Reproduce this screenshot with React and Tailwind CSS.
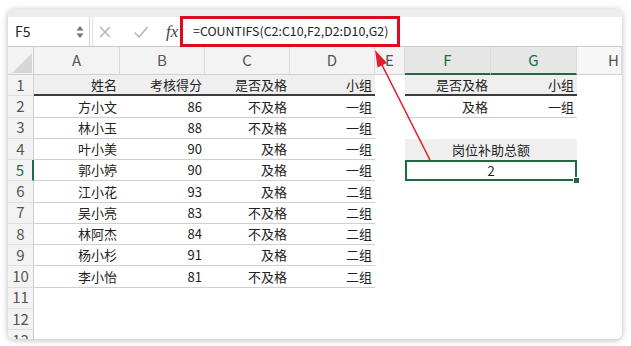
import React from "react";

const FONT = { fontFamily: '"Noto Sans CJK SC", "Noto Sans", sans-serif' };

const rows = [
  ["姓名", "考核得分", "是否及格", "小组"],
  ["方小文", "86", "不及格", "一组"],
  ["林小玉", "88", "不及格", "一组"],
  ["叶小美", "90", "及格", "一组"],
  ["郭小婷", "90", "及格", "一组"],
  ["江小花", "93", "及格", "二组"],
  ["吴小亮", "83", "不及格", "二组"],
  ["林阿杰", "84", "不及格", "二组"],
  ["杨小杉", "91", "及格", "二组"],
  ["李小怡", "81", "不及格", "二组"],
];

function RowNum({ n }) {
  const sel = n === 5;
  return (
    <div
      className={
        "h-[21.25px] flex items-center justify-center text-[15px] bg-[#f3f3f3] border-b border-[#dedede] " +
        (sel ? "text-[#1d6b3e] border-r-2 border-r-[#1d6b3e]" : "text-[#555] border-r border-r-[#cfcfcf]")
      }
    >
      {n}
    </div>
  );
}

function Cell({ children, cls = "" }) {
  return (
    <div className={"h-[21.25px] flex items-center justify-end pr-[3px] text-[13px] text-[#222] " + cls}>
      {children}
    </div>
  );
}

export default function App() {
  const headers = ["A", "B", "C", "D", "E", "F", "G", "H"];
  return (
    <div className="relative w-[631px] h-[346px] bg-white overflow-hidden pt-[9px] pl-[8px]" style={FONT}>
      <div className="relative w-[614px] h-[330px] rounded-[6px] bg-white shadow-[0_1px_6px_rgba(0,0,0,0.28)] overflow-hidden flex flex-col">
        <div className="h-[8px] shrink-0 bg-[#ececec]" />
        {/* formula bar */}
        <div className="h-[30px] shrink-0 flex items-stretch bg-white border-b border-[#c9c9c9]">
          <div className="w-[82px] flex items-center justify-between pl-[7px] pr-[5px] border-r border-[#d4d4d4]">
            <span className="text-[14px] text-[#222]">F5</span>
            <svg width="8" height="14" viewBox="0 0 8 14">
              <polygon points="4,1 7.5,5.5 0.5,5.5" fill="#707070" />
              <polygon points="4,13 7.5,8.5 0.5,8.5" fill="#707070" />
            </svg>
          </div>
          <div className="w-[3px] border-r border-[#e2e2e2]" />
          <div className="w-[88px] flex items-center">
            <svg className="ml-[5px]" width="14" height="14" viewBox="0 0 14 14">
              <path d="M2 2 L12 12 M12 2 L2 12" stroke="#b8b8b8" strokeWidth="1.6" />
            </svg>
            <svg className="ml-[21px]" width="16" height="14" viewBox="0 0 16 14">
              <path d="M1.5 7.5 L6 12 L14.5 2" stroke="#b8b8b8" strokeWidth="1.6" fill="none" />
            </svg>
            <span
              className="ml-[17px] text-[17px] text-[#444] italic"
              style={{ fontFamily: '"Liberation Serif", "DejaVu Serif", serif' }}
            >
              fx
            </span>
          </div>
          <div className="flex-1 flex items-center pl-[12px] text-[12.4px] text-[#222]">
            =COUNTIFS(C2:C10,F2,D2:D10,G2)
          </div>
        </div>
        <div className="absolute left-[172px] top-[7px] w-[220px] h-[31px] border-[3px] border-[#de0a1e]" />

        {/* grid */}
        <div className="shrink-0 grid grid-cols-[26px_86px_85px_85px_85px_30px_86px_86px_1fr]">
          {/* header row */}
          <div className="h-[28px] bg-[#f3f3f3] border-r border-b border-[#cfcfcf] flex items-end justify-end">
            <svg width="22" height="22" viewBox="0 0 22 22">
              <polygon points="21,1 21,21 1,21" fill="#d6d6d6" />
            </svg>
          </div>
          {headers.map((h) => {
            const sel = h === "F" || h === "G";
            return (
              <div
                key={h}
                className={
                  "h-[28px] flex items-center text-[15px] border-r border-r-[#dadada] " +
                  (sel
                    ? "justify-center bg-[#e6e6e6] text-[#1d6b3e] border-b-2 border-b-[#1d6b3e]"
                    : h === "H"
                    ? "justify-end pr-[2px] bg-[#f7f7f7] text-[#555] border-b border-b-[#cfcfcf]"
                    : "justify-center bg-[#f3f3f3] text-[#555] border-b border-b-[#cfcfcf]")
                }
              >
                {h}
              </div>
            );
          })}

          {/* data rows */}
          {Array.from({ length: 13 }).map((_, i) => {
            const n = i + 1;
            const r = rows[i];
            const out = [<RowNum key={"n" + n} n={n} />];
            if (r) {
              r.forEach((v, j) => {
                out.push(
                  <Cell
                    key={n + "-" + j}
                    cls={
                      n === 1
                        ? "bg-[#efefef] border-b-2 border-[#3c3c3c]"
                        : "border-b border-[#cfcfcf]"
                    }
                  >
                    {v}
                  </Cell>
                );
              });
            } else {
              for (let j = 0; j < 4; j++) out.push(<Cell key={n + "-" + j} />);
            }
            out.push(<Cell key={n + "-E"} />);
            if (n === 1) {
              out.push(
                <Cell key="f1" cls="bg-[#efefef] border-b-2 border-[#3c3c3c]">是否及格</Cell>,
                <Cell key="g1" cls="bg-[#efefef] border-b-2 border-[#3c3c3c]">小组</Cell>
              );
            } else if (n === 2) {
              out.push(
                <Cell key="f2" cls="border-b border-[#cfcfcf]">及格</Cell>,
                <Cell key="g2" cls="border-b border-[#cfcfcf]">一组</Cell>
              );
            } else if (n === 4) {
              out.push(
                <div
                  key="f4"
                  className="col-span-2 h-[21.25px] flex items-center justify-center text-[13px] text-[#222] bg-[#efefef]"
                >
                  岗位补助总额
                </div>
              );
            } else if (n === 5) {
              out.push(
                <div
                  key="f5"
                  className="relative col-span-2 h-[21.25px] flex items-center justify-center text-[13px] text-[#222] border-2 border-[#1d6b3e]"
                >
                  2
                  <div className="absolute right-[-5px] bottom-[-5px] w-[7px] h-[7px] bg-[#1d6b3e] border border-white" />
                </div>
              );
            } else {
              out.push(<Cell key={n + "-F"} />, <Cell key={n + "-G"} />);
            }
            out.push(<Cell key={n + "-H"} />);
            return out;
          })}
        </div>
      </div>

      {/* annotation arrow */}
      <svg className="absolute left-0 top-0 pointer-events-none" width="631" height="346" viewBox="0 0 631 346">
        <line x1="430" y1="160" x2="380" y2="61" stroke="#e3202b" strokeWidth="1.6" />
        <polygon points="375,50 387,63 377.5,67.5" fill="#e3202b" />
      </svg>
    </div>
  );
}
